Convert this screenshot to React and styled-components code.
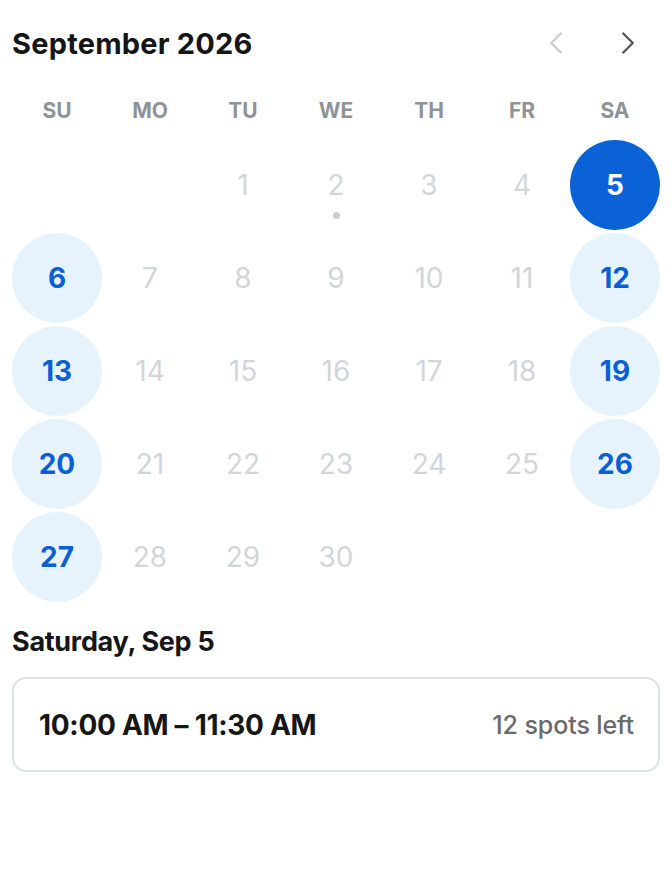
import React from 'react';
import styled, { createGlobalStyle } from 'styled-components';
import { ChevronLeft, ChevronRight } from 'lucide-react';

const GlobalStyle = createGlobalStyle`
  body {
    margin: 0;
    background: #fff;
    font-family: Inter, "Noto Sans", sans-serif;
  }
`;

const Page = styled.div`
  padding: 22px 12px 0;
  width: 648px;
`;

const Header = styled.div`
  display: flex;
  align-items: center;
  justify-content: space-between;
  height: 42px;
`;

const Month = styled.h1`
  margin: 0;
  font-size: 29px;
  font-weight: 700;
  letter-spacing: 0.2px;
  color: #161616;
`;

const Nav = styled.div`
  display: flex;
  gap: 34px;
  padding-right: 13px;
`;

const NavButton = styled.button`
  border: 0;
  background: none;
  padding: 0;
  display: flex;
  color: ${p => (p.disabled ? '#cbcdd0' : '#555')};
`;

const Weekdays = styled.div`
  display: grid;
  grid-template-columns: repeat(7, 1fr);
  gap: 3px;
  margin-top: 20px;
  height: 52px;
  align-items: center;
`;

const Weekday = styled.div`
  text-align: center;
  font-size: 21px;
  font-weight: 700;
  color: #8e9398;
`;

const Grid = styled.div`
  display: grid;
  grid-template-columns: repeat(7, 1fr);
  gap: 3px;
  margin-top: 4px;
`;

const Day = styled.div`
  position: relative;
  height: 90px;
  border-radius: 50%;
  display: flex;
  align-items: center;
  justify-content: center;
  font-size: 28px;
  font-weight: ${p => (p.$available ? 700 : 400)};
  color: ${p => (p.$selected ? '#fff' : p.$available ? '#0b5fd4' : '#d2d6da')};
  background: ${p => (p.$selected ? '#0b62d6' : p.$available ? '#e6f3fd' : 'transparent')};
`;

const Dot = styled.span`
  position: absolute;
  left: 50%;
  top: 72px;
  width: 7px;
  height: 7px;
  margin-left: -3.5px;
  border-radius: 50%;
  background: #c9cdd1;
`;

const DateTitle = styled.h2`
  margin: 23px 0 0;
  font-size: 27px;
  font-weight: 700;
  letter-spacing: -0.3px;
  color: #161616;
`;

const Slot = styled.div`
  margin-top: 19px;
  display: flex;
  align-items: center;
  justify-content: space-between;
  height: 91px;
  padding: 0 24px 0 25px;
  border: 2px solid #dfe2e5;
  border-radius: 14px;
`;

const Time = styled.span`
  font-size: 28px;
  font-weight: 700;
  color: #161616;
  letter-spacing: -0.3px;
`;

const Spots = styled.span`
  font-size: 25px;
  font-weight: 500;
  color: #6a6a6a;
  letter-spacing: -0.1px;
`;

const weekdays = ['SU', 'MO', 'TU', 'WE', 'TH', 'FR', 'SA'];
const available = [5, 6, 12, 13, 19, 20, 26, 27];
const days = [null, null, ...Array.from({ length: 30 }, (_, i) => i + 1)];

export default function App() {
  return (
    <>
      <GlobalStyle />
      <Page>
        <Header>
          <Month>September 2026</Month>
          <Nav>
            <NavButton disabled>
              <ChevronLeft size={38} strokeWidth={1.5} />
            </NavButton>
            <NavButton>
              <ChevronRight size={38} strokeWidth={1.5} />
            </NavButton>
          </Nav>
        </Header>
        <Weekdays>
          {weekdays.map(w => (
            <Weekday key={w}>{w}</Weekday>
          ))}
        </Weekdays>
        <Grid>
          {days.map((d, i) =>
            d ? (
              <Day key={i} $available={available.includes(d)} $selected={d === 5}>
                {d}
                {d === 2 && <Dot />}
              </Day>
            ) : (
              <div key={i} />
            )
          )}
        </Grid>
        <DateTitle>Saturday, Sep 5</DateTitle>
        <Slot>
          <Time>10:00 AM – 11:30 AM</Time>
          <Spots>12 spots left</Spots>
        </Slot>
      </Page>
    </>
  );
}
